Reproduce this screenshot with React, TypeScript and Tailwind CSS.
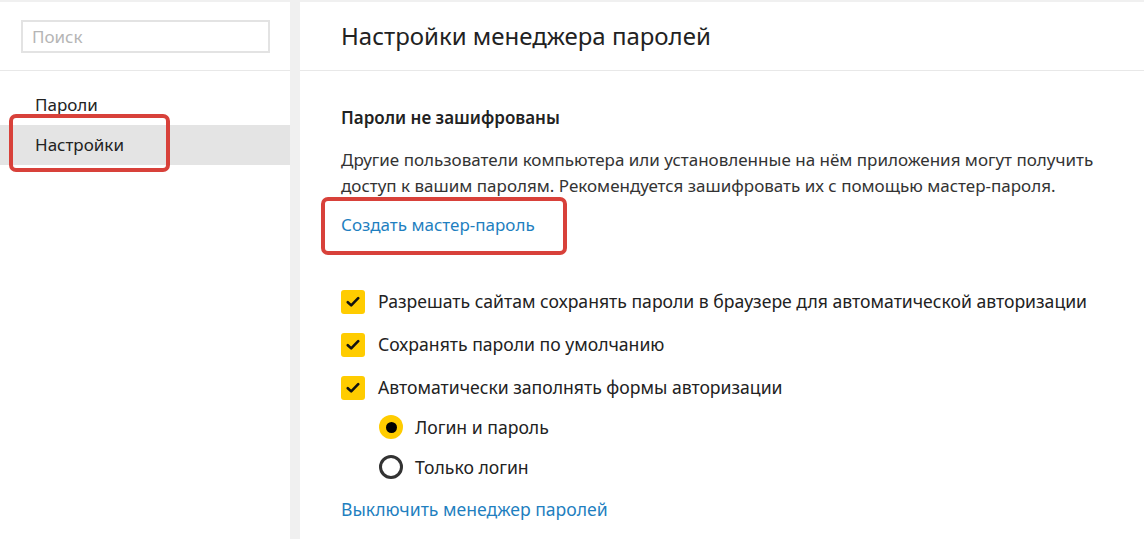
import React from 'react';

const font = { fontFamily: '"Noto Sans", "Open Sans", sans-serif' };

const Check: React.FC<{ label: string }> = ({ label }) => (
  <div className="flex items-center h-[43px]">
    <span className="w-6 h-6 rounded-[3px] bg-[#ffcc00] flex items-center justify-center">
      <svg width="14" height="12" viewBox="0 0 14 12" fill="none">
        <path d="M1.8 6.2 L5.2 9.4 L12.2 2.2" stroke="#111" strokeWidth="2.6" strokeLinecap="round" strokeLinejoin="round" />
      </svg>
    </span>
    <span className="ml-[13px] text-[17.6px] text-[#222]">{label}</span>
  </div>
);

const Radio: React.FC<{ label: string; checked?: boolean }> = ({ label, checked }) => (
  <div className="flex items-center h-10 pl-[38px]">
    {checked ? (
      <span className="w-6 h-6 rounded-full bg-[#ffcc00] flex items-center justify-center">
        <span className="w-[11px] h-[11px] rounded-full bg-black" />
      </span>
    ) : (
      <span className="w-6 h-6 rounded-full border-[3px] border-[#333]" />
    )}
    <span className="ml-3 text-[17.6px] text-[#222]">{label}</span>
  </div>
);

export default function App() {
  return (
    <div className="w-[1144px] h-[539px] bg-[#f0f0f0] pt-[2px] flex overflow-hidden" style={font}>
      {/* Sidebar */}
      <aside className="w-[290px] bg-white flex flex-col">
        <div className="h-[69px] border-b border-[#e8e8e8] px-[21px] pt-[18px]">
          <div className="w-[249px] h-[33px] border-2 border-[#e3e3e3] px-[9px] flex items-center text-[17px] text-[#b5b5b5]">
            Поиск
          </div>
        </div>
        <nav className="pt-[14px]">
          <div className="h-10 pl-[35px] flex items-center text-[17px] text-[#222]">Пароли</div>
          <div className="relative h-10 bg-[#e4e4e4] pl-[35px] flex items-center text-[17px] text-[#222]">
            Настройки
            <span className="absolute left-[9px] top-[-11px] w-[161px] h-[58px] border-4 border-[#d8413a] rounded-[7px]" />
          </div>
        </nav>
      </aside>

      {/* Main */}
      <main className="ml-[10px] flex-1 bg-white flex flex-col">
        <div className="h-[69px] border-b border-[#e8e8e8] pl-[41px] flex items-center text-[24px] text-[#222]">
          Настройки менеджера паролей
        </div>
        <div className="pl-[41px] pt-[34px]">
          <div className="text-[17px] font-semibold text-[#222] leading-[26px]">Пароли не зашифрованы</div>
          <p className="mt-[16px] text-[17px] leading-[26px] text-[#333]">
            Другие пользователи компьютера или установленные на нём приложения могут получить
            <br />
            доступ к вашим паролям. Рекомендуется зашифровать их с помощью мастер-пароля.
          </p>
          <div className="relative mt-[13px] h-[26px] flex items-center text-[17px] text-[#1f7fc0]">
            Создать мастер-пароль
            <span className="absolute left-[-20px] top-[-15px] w-[246px] h-[58px] border-4 border-[#d8413a] rounded-[7px]" />
          </div>
          <div className="mt-[42px]">
            <Check label="Разрешать сайтам сохранять пароли в браузере для автоматической авторизации" />
            <Check label="Сохранять пароли по умолчанию" />
            <Check label="Автоматически заполнять формы авторизации" />
            <div className="-mt-[2px]">
              <Radio label="Логин и пароль" checked />
              <Radio label="Только логин" />
            </div>
          </div>
          <div className="mt-[9px] text-[17.6px] text-[#1f7fc0]">Выключить менеджер паролей</div>
        </div>
      </main>
    </div>
  );
}
